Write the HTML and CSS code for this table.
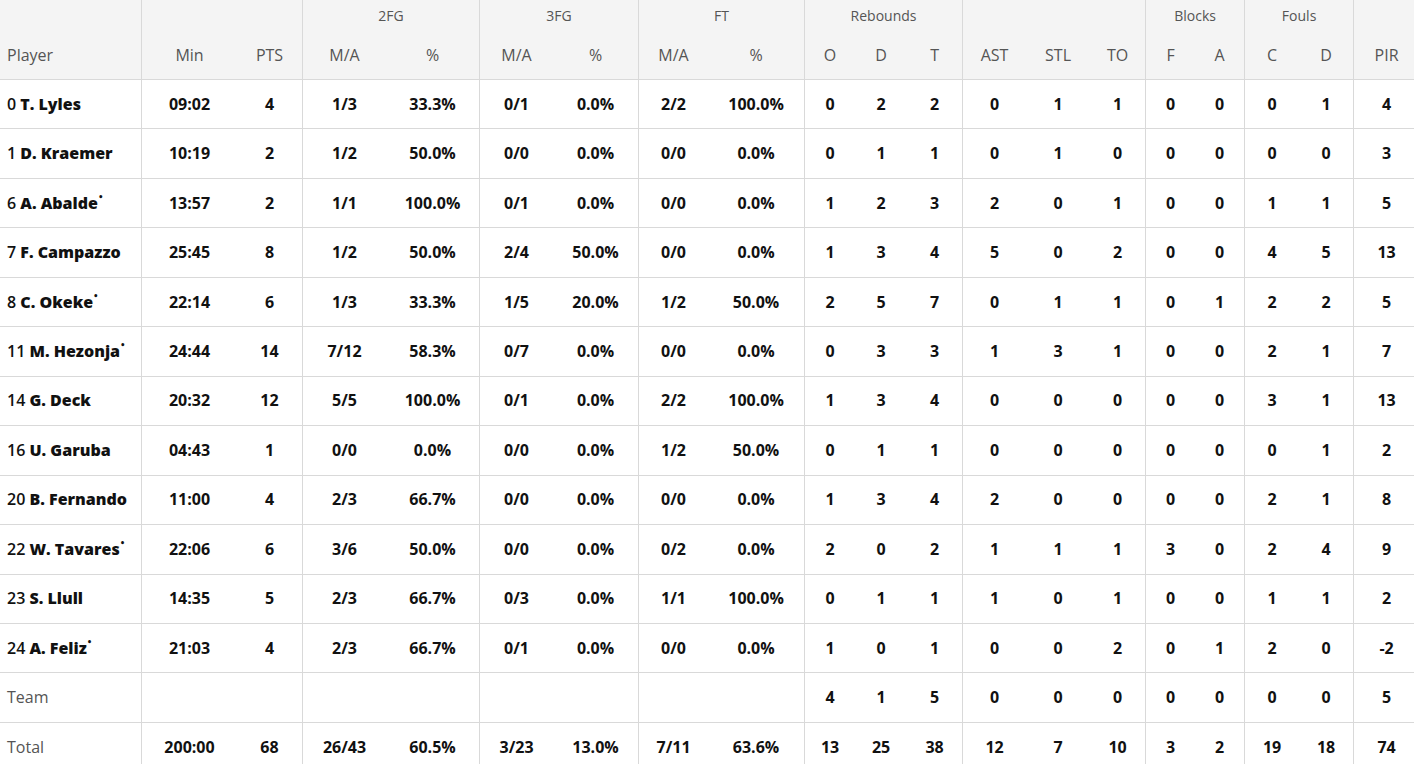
FILE: index.html
```html
<!DOCTYPE html>
<html lang="en">
<head>
<meta charset="utf-8">
<title>Box score</title>
<link rel="stylesheet" href="styles.css">
</head>
<body>
<table class="box">
<colgroup>
<col class="c141"><col class="c96"><col class="c65"><col class="c84"><col class="c93"><col class="c74"><col class="c85"><col class="c70"><col class="c96"><col class="c51"><col class="c52"><col class="c55"><col class="c64"><col class="c64"><col class="c55"><col class="c50"><col class="c49"><col class="c55"><col class="c54"><col class="c66">
</colgroup>
<thead>
<tr class="grp">
<th></th><th colspan="2" class="bl"></th><th colspan="2" class="bl">2FG</th><th colspan="2" class="bl">3FG</th><th colspan="2" class="bl">FT</th><th colspan="3" class="bl">Rebounds</th><th colspan="3" class="bl"></th><th colspan="2" class="bl">Blocks</th><th colspan="2" class="bl">Fouls</th><th class="bl"></th>
</tr>
<tr class="sub">
<th class="pl">Player</th><th class="bl">Min</th><th>PTS</th><th class="bl">M/A</th><th>%</th><th class="bl">M/A</th><th>%</th><th class="bl">M/A</th><th>%</th><th class="bl">O</th><th>D</th><th>T</th><th class="bl">AST</th><th>STL</th><th>TO</th><th class="bl">F</th><th>A</th><th class="bl">C</th><th>D</th><th class="bl">PIR</th>
</tr>
</thead>
<tbody>
<tr><td class="pl"><span class="no">0</span> <b>T. Lyles</b></td><td class="bl">09:02</td><td>4</td><td class="bl">1/3</td><td>33.3%</td><td class="bl">0/1</td><td>0.0%</td><td class="bl">2/2</td><td>100.0%</td><td class="bl">0</td><td>2</td><td>2</td><td class="bl">0</td><td>1</td><td>1</td><td class="bl">0</td><td>0</td><td class="bl">0</td><td>1</td><td class="bl">4</td></tr>
<tr><td class="pl"><span class="no">1</span> <b>D. Kraemer</b></td><td class="bl">10:19</td><td>2</td><td class="bl">1/2</td><td>50.0%</td><td class="bl">0/0</td><td>0.0%</td><td class="bl">0/0</td><td>0.0%</td><td class="bl">0</td><td>1</td><td>1</td><td class="bl">0</td><td>1</td><td>0</td><td class="bl">0</td><td>0</td><td class="bl">0</td><td>0</td><td class="bl">3</td></tr>
<tr><td class="pl"><span class="no">6</span> <b>A. Abalde<span class="st">•</span></b></td><td class="bl">13:57</td><td>2</td><td class="bl">1/1</td><td>100.0%</td><td class="bl">0/1</td><td>0.0%</td><td class="bl">0/0</td><td>0.0%</td><td class="bl">1</td><td>2</td><td>3</td><td class="bl">2</td><td>0</td><td>1</td><td class="bl">0</td><td>0</td><td class="bl">1</td><td>1</td><td class="bl">5</td></tr>
<tr><td class="pl"><span class="no">7</span> <b>F. Campazzo</b></td><td class="bl">25:45</td><td>8</td><td class="bl">1/2</td><td>50.0%</td><td class="bl">2/4</td><td>50.0%</td><td class="bl">0/0</td><td>0.0%</td><td class="bl">1</td><td>3</td><td>4</td><td class="bl">5</td><td>0</td><td>2</td><td class="bl">0</td><td>0</td><td class="bl">4</td><td>5</td><td class="bl">13</td></tr>
<tr><td class="pl"><span class="no">8</span> <b>C. Okeke<span class="st">•</span></b></td><td class="bl">22:14</td><td>6</td><td class="bl">1/3</td><td>33.3%</td><td class="bl">1/5</td><td>20.0%</td><td class="bl">1/2</td><td>50.0%</td><td class="bl">2</td><td>5</td><td>7</td><td class="bl">0</td><td>1</td><td>1</td><td class="bl">0</td><td>1</td><td class="bl">2</td><td>2</td><td class="bl">5</td></tr>
<tr><td class="pl"><span class="no">11</span> <b>M. Hezonja<span class="st">•</span></b></td><td class="bl">24:44</td><td>14</td><td class="bl">7/12</td><td>58.3%</td><td class="bl">0/7</td><td>0.0%</td><td class="bl">0/0</td><td>0.0%</td><td class="bl">0</td><td>3</td><td>3</td><td class="bl">1</td><td>3</td><td>1</td><td class="bl">0</td><td>0</td><td class="bl">2</td><td>1</td><td class="bl">7</td></tr>
<tr><td class="pl"><span class="no">14</span> <b>G. Deck</b></td><td class="bl">20:32</td><td>12</td><td class="bl">5/5</td><td>100.0%</td><td class="bl">0/1</td><td>0.0%</td><td class="bl">2/2</td><td>100.0%</td><td class="bl">1</td><td>3</td><td>4</td><td class="bl">0</td><td>0</td><td>0</td><td class="bl">0</td><td>0</td><td class="bl">3</td><td>1</td><td class="bl">13</td></tr>
<tr><td class="pl"><span class="no">16</span> <b>U. Garuba</b></td><td class="bl">04:43</td><td>1</td><td class="bl">0/0</td><td>0.0%</td><td class="bl">0/0</td><td>0.0%</td><td class="bl">1/2</td><td>50.0%</td><td class="bl">0</td><td>1</td><td>1</td><td class="bl">0</td><td>0</td><td>0</td><td class="bl">0</td><td>0</td><td class="bl">0</td><td>1</td><td class="bl">2</td></tr>
<tr><td class="pl"><span class="no">20</span> <b>B. Fernando</b></td><td class="bl">11:00</td><td>4</td><td class="bl">2/3</td><td>66.7%</td><td class="bl">0/0</td><td>0.0%</td><td class="bl">0/0</td><td>0.0%</td><td class="bl">1</td><td>3</td><td>4</td><td class="bl">2</td><td>0</td><td>0</td><td class="bl">0</td><td>0</td><td class="bl">2</td><td>1</td><td class="bl">8</td></tr>
<tr><td class="pl"><span class="no">22</span> <b>W. Tavares<span class="st">•</span></b></td><td class="bl">22:06</td><td>6</td><td class="bl">3/6</td><td>50.0%</td><td class="bl">0/0</td><td>0.0%</td><td class="bl">0/2</td><td>0.0%</td><td class="bl">2</td><td>0</td><td>2</td><td class="bl">1</td><td>1</td><td>1</td><td class="bl">3</td><td>0</td><td class="bl">2</td><td>4</td><td class="bl">9</td></tr>
<tr><td class="pl"><span class="no">23</span> <b>S. Llull</b></td><td class="bl">14:35</td><td>5</td><td class="bl">2/3</td><td>66.7%</td><td class="bl">0/3</td><td>0.0%</td><td class="bl">1/1</td><td>100.0%</td><td class="bl">0</td><td>1</td><td>1</td><td class="bl">1</td><td>0</td><td>1</td><td class="bl">0</td><td>0</td><td class="bl">1</td><td>1</td><td class="bl">2</td></tr>
<tr><td class="pl"><span class="no">24</span> <b>A. Feliz<span class="st">•</span></b></td><td class="bl">21:03</td><td>4</td><td class="bl">2/3</td><td>66.7%</td><td class="bl">0/1</td><td>0.0%</td><td class="bl">0/0</td><td>0.0%</td><td class="bl">1</td><td>0</td><td>1</td><td class="bl">0</td><td>0</td><td>2</td><td class="bl">0</td><td>1</td><td class="bl">2</td><td>0</td><td class="bl">-2</td></tr>
<tr><td class="pl lbl">Team</td><td class="bl"></td><td></td><td class="bl"></td><td></td><td class="bl"></td><td></td><td class="bl"></td><td></td><td class="bl">4</td><td>1</td><td>5</td><td class="bl">0</td><td>0</td><td>0</td><td class="bl">0</td><td>0</td><td class="bl">0</td><td>0</td><td class="bl">5</td></tr>
<tr><td class="pl lbl">Total</td><td class="bl">200:00</td><td>68</td><td class="bl">26/43</td><td>60.5%</td><td class="bl">3/23</td><td>13.0%</td><td class="bl">7/11</td><td>63.6%</td><td class="bl">13</td><td>25</td><td>38</td><td class="bl">12</td><td>7</td><td>10</td><td class="bl">3</td><td>2</td><td class="bl">19</td><td>18</td><td class="bl">74</td></tr>
</tbody>
</table>
</body>
</html>
```

FILE: styles.css
```css
html, body {
  margin: 0;
  padding: 0;
  background: #ffffff;
  overflow: hidden;
}
body {
  font-family: "Open Sans", Lato, "Liberation Sans", sans-serif;
  color: #111111;
}
.box {
  table-layout: fixed;
  width: 1419px;
  border-collapse: separate;
  border-spacing: 0;
}
.c141 { width: 141px; }
.c96 { width: 96px; }
.c65 { width: 65px; }
.c84 { width: 84px; }
.c93 { width: 93px; }
.c74 { width: 74px; }
.c85 { width: 85px; }
.c70 { width: 70px; }
.c51 { width: 51px; }
.c52 { width: 52px; }
.c55 { width: 55px; }
.c64 { width: 64px; }
.c50 { width: 50px; }
.c49 { width: 49px; }
.c54 { width: 54px; }
.c66 { width: 66px; }

thead th {
  background: #f4f4f4;
  color: #555555;
  font-weight: 400;
  text-align: center;
  padding: 0;
  white-space: nowrap;
}
.grp th {
  height: 31px;
  font-size: 14px;
  vertical-align: middle;
}
.sub th {
  height: 47px;
  padding-bottom: 1px;
  font-size: 16px;
  border-bottom: 1px solid #d9d9d9;
  vertical-align: middle;
}
.bl {
  border-left: 1px solid #d9d9d9;
}
tbody td {
  height: 47.46px;
  padding: 0 0 1px 0;
  border-bottom: 1px solid #d9d9d9;
  text-align: center;
  font-size: 16px;
  font-weight: 700;
  white-space: nowrap;
  vertical-align: middle;
}
.pl {
  text-align: left !important;
  padding-left: 7px !important;
}
.sub th.pl {
  text-align: left;
}
.no {
  font-weight: 600;
}
.st {
  font-size: 9px;
  vertical-align: top;
  position: relative;
  top: -2px;
  margin-left: 1px;
}
.lbl {
  font-weight: 400 !important;
  color: #555555;
  font-size: 16px !important;
}
```
